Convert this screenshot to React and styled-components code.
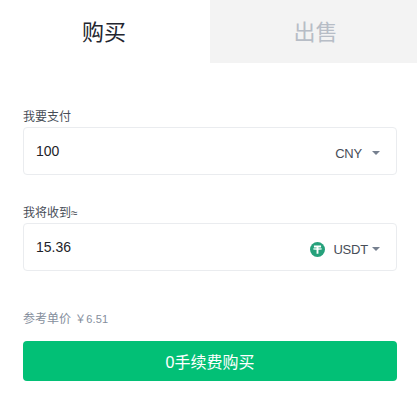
import React from "react";
import styled, { createGlobalStyle } from "styled-components";

const Global = createGlobalStyle`
  html, body {
    margin: 0;
    padding: 0;
    background: #fff;
    font-family: "Liberation Sans", Roboto, "Noto Sans CJK SC", sans-serif;
  }
  * { box-sizing: border-box; }
`;

const Page = styled.div`
  width: 417px;
  height: 418px;
  overflow: hidden;
  background: #fff;
`;

const Tabs = styled.div`
  display: grid;
  grid-template-columns: 210px 207px;
  height: 63px;
`;

const Tab = styled.div`
  display: flex;
  align-items: center;
  justify-content: center;
  padding: ${(p) => (p.$active ? "0 2px 4px 0" : "0 0 4px 4px")};
  font-size: 22px;
  color: ${(p) => (p.$active ? "#23262f" : "#b7bdc6")};
  background: ${(p) => (p.$active ? "#fff" : "#f3f3f3")};
`;

const Form = styled.div`
  display: flex;
  flex-direction: column;
  padding: 46px 20px 0 23px;
`;

const Field = styled.div`
  margin-bottom: 30px;
`;

const Label = styled.div`
  font-size: 12px;
  line-height: 17px;
  height: 18px;
  color: #474d57;
`;

const InputBox = styled.div`
  display: flex;
  align-items: center;
  justify-content: space-between;
  height: 48px;
  padding: 0 16px 0 12px;
  border: 1px solid #eaecef;
  border-radius: 4px;
  background: #fff;
`;

const Value = styled.span`
  font-size: 14px;
  color: #1e2329;
`;

const Currency = styled.div`
  display: flex;
  align-items: center;
  gap: ${(p) => p.$gap}px;
  padding-top: 4px;
  font-size: 13px;
  letter-spacing: -0.2px;
  color: #474d57;
`;

const Coin = styled.svg`
  width: 15px;
  height: 15px;
  margin-right: 4px;
`;

const Caret = styled.span`
  width: 0;
  height: 0;
  border-left: 4px solid transparent;
  border-right: 4px solid transparent;
  border-top: 4.5px solid #76808f;
`;

const Rate = styled.div`
  display: flex;
  gap: 4px;
  margin-top: 10px;
  font-size: 12px;
  line-height: 17px;
  color: #848e9c;
`;

const Price = styled.span`
  font-size: 11px;
  letter-spacing: 0.2px;
`;

const BuyButton = styled.button`
  width: 374px;
  height: 40px;
  margin-top: 13px;
  border: 0;
  border-radius: 4px;
  background: #02c076;
  color: #fff;
  font-family: inherit;
  font-size: 16px;
`;

function Tether() {
  return (
    <Coin viewBox="0 0 16 16">
      <circle cx="8" cy="8" r="8" fill="#26a17b" />
      <path d="M4.2 3.8h7.6v2H9v6.6H7V5.8H4.2z" fill="#fff" />
      <path d="M3.6 7.4c1.6-.6 7.2-.6 8.8 0-1.6.9-7.2.9-8.8 0z" fill="none" stroke="#fff" strokeWidth=".8" />
    </Coin>
  );
}

export default function App() {
  return (
    <Page>
      <Global />
      <Tabs>
        <Tab $active>购买</Tab>
        <Tab>出售</Tab>
      </Tabs>
      <Form>
        <Field>
          <Label>我要支付</Label>
          <InputBox>
            <Value>100</Value>
            <Currency $gap={10}>
              CNY
              <Caret />
            </Currency>
          </InputBox>
        </Field>
        <Field>
          <Label>我将收到≈</Label>
          <InputBox>
            <Value>15.36</Value>
            <Currency $gap={4}>
              <Tether />
              USDT
              <Caret />
            </Currency>
          </InputBox>
        </Field>
        <Rate>
          <span>参考单价</span>
          <Price>￥6.51</Price>
        </Rate>
        <BuyButton>0手续费购买</BuyButton>
      </Form>
    </Page>
  );
}
